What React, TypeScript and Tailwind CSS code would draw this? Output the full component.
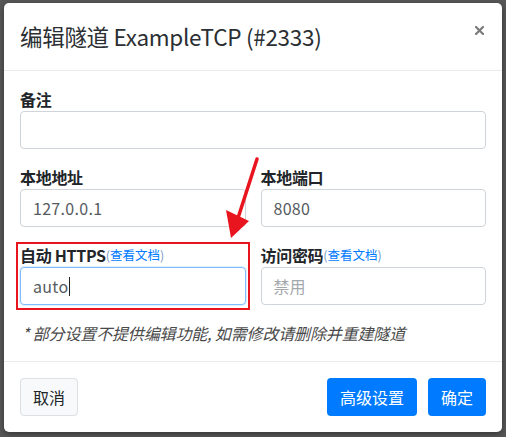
import React from "react";

const font = { fontFamily: '"Noto Sans CJK SC", "Noto Sans", sans-serif' };

function Field({ label, link, children }: { label: string; link?: boolean; children: React.ReactNode }) {
  return (
    <div className="flex flex-col">
      <div className="h-[24px] flex items-center text-[16px] leading-[24px] text-[#212529]">
        <span className="font-bold tracking-[-0.3px]">{label}</span>
        {link && (
          <span className="text-[12.5px] text-[#7a9cc6]">
            (<span className="text-[#007bff]">查看文档</span>)
          </span>
        )}
      </div>
      {children}
    </div>
  );
}

function Input({ value, placeholder, focused }: { value?: string; placeholder?: string; focused?: boolean }) {
  return (
    <div
      className={
        "h-[38px] rounded-[4px] border bg-white px-[12px] flex items-center text-[16px] " +
        (focused ? "border-[#80bdff] shadow-[0_0_0_1px_rgba(0,123,255,0.12)]" : "border-[#ced4da]")
      }
    >
      {value ? (
        <span className="text-[#555b61] tracking-[0.3px]">{value}</span>
      ) : (
        <span className="text-[#a3a8ad]">{placeholder}</span>
      )}
      {focused && <span className="ml-[1px] w-[1px] h-[19px] bg-[#222]" />}
    </div>
  );
}

export default function App() {
  return (
    <div className="relative w-[506px] h-[437px] bg-[#575757] overflow-hidden pt-[3px] pl-[4px]" style={font}>
      <div className="w-[498px] h-[429px] bg-white rounded-[5px] flex flex-col shadow-[0_2px_6px_rgba(0,0,0,0.4)]">
        {/* header */}
        <div className="h-[68px] border-b border-[#e9ecef] flex items-center justify-between pl-[16px] pr-[18px]">
          <h5 className="text-[22.5px] text-[#2b2f33] tracking-[-0.3px]">编辑隧道 ExampleTCP (#2333)</h5>
          <svg width="9" height="9" viewBox="0 0 9 9" className="-mt-[12px]">
            <path d="M1 1L8 8M8 1L1 8" stroke="#7b7b7b" strokeWidth="2.2" strokeLinecap="square" />
          </svg>
        </div>

        {/* body */}
        <div className="px-[16px] pt-[16px] pb-[16px] flex flex-col gap-[16px]">
          <Field label="备注">
            <Input />
          </Field>
          <div className="grid grid-cols-2 gap-x-[15px] gap-y-[16px]">
            <Field label="本地地址">
              <Input value="127.0.0.1" />
            </Field>
            <Field label="本地端口">
              <Input value="8080" />
            </Field>
            <div className="relative">
              <div className="absolute -left-[4px] -right-[4px] -top-[1px] -bottom-[5px] border-2 border-[#e8141e]" />
              <Field label="自动 HTTPS" link>
                <Input value="auto" focused />
              </Field>
            </div>
            <Field label="访问密码" link>
              <Input placeholder="禁用" />
            </Field>
          </div>
          <p className="italic text-[16px] leading-[24px] text-[#4a4a4a] pl-[2px] tracking-[-0.15px]">
            * 部分设置不提供编辑功能, 如需修改请删除并重建隧道
          </p>
        </div>

        {/* footer */}
        <div className="flex-1 border-t border-[#e9ecef] flex items-center justify-between px-[16px]">
          <button className="h-[38px] px-[12px] rounded-[4px] border border-[#dcdfe3] bg-[#f8f9fa] text-[16px] text-[#212529]">
            取消
          </button>
          <div className="flex gap-[11px]">
            <button className="h-[38px] px-[13px] rounded-[4px] bg-[#007bff] text-[16px] text-white">高级设置</button>
            <button className="h-[38px] px-[13px] rounded-[4px] bg-[#007bff] text-[16px] text-white">确定</button>
          </div>
        </div>
      </div>

      {/* annotation arrow */}
      <svg className="absolute left-0 top-0 pointer-events-none" width="506" height="437">
        <line x1="257" y1="159" x2="238" y2="218" stroke="#e8141e" strokeWidth="3.5" strokeLinecap="round" />
        <polygon points="231,238 226,210 249,221" fill="#e8141e" />
      </svg>
    </div>
  );
}
